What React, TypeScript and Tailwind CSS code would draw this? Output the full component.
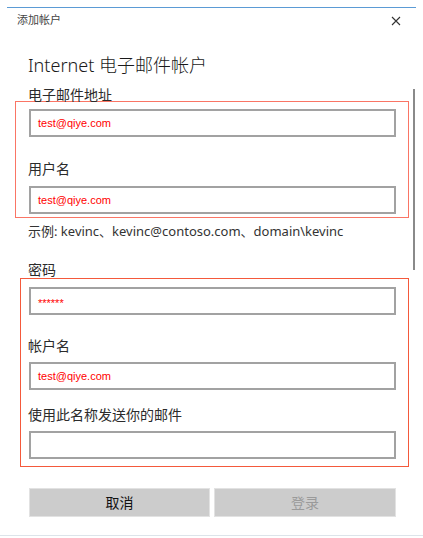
import React from 'react';

const FONT = { fontFamily: '"Noto Sans", "Noto Sans CJK SC", sans-serif' };
const INPUT_FONT = { fontFamily: '"Liberation Sans", Arial, sans-serif' };

function Field({ value, secret }: { value?: string; secret?: boolean }) {
  return (
    <div className="w-[367px] h-[28px] border-2 border-[#a2a2a2] bg-white flex items-center pl-[7px]">
      {value && (
        <span
          className={`text-[11px] leading-none text-[#ff0000] ${secret ? 'translate-y-[2px] text-[#f44]' : ''}`}
          style={INPUT_FONT}
        >
          {value}
        </span>
      )}
    </div>
  );
}

function Label({ children, className = '' }: { children: React.ReactNode; className?: string }) {
  return <div className={`h-5 text-[14px] leading-5 text-[#2b2b2b] ${className}`}>{children}</div>;
}

export default function App() {
  return (
    <div className="w-[423px] h-[538px] bg-white relative overflow-hidden" style={FONT}>
      {/* window top edge */}
      <div className="pt-[7px] px-[7px]">
        <div className="h-px w-[409px] bg-[#5b9bd5]" />
      </div>

      {/* title bar */}
      <div className="h-[24px] flex items-center justify-between pl-[17px] pr-[22px]">
        <span className="text-[11px] leading-[14px] text-[#444]">添加帐户</span>
        <svg width="10" height="10" viewBox="0 0 10 10" className="mt-[2px]">
          <path d="M1 1 L9 9 M9 1 L1 9" stroke="#333" strokeWidth="1.1" fill="none" />
        </svg>
      </div>

      {/* scrollbar */}
      <div className="absolute left-[413px] top-[89px] w-[2px] h-[181px] bg-[#8a8a8a]" />

      <div className="pl-[28px] mt-[21px]">
        <div className="text-[18px] leading-6 text-[#1a1a1a] font-light">Internet 电子邮件帐户</div>
        <Label className="mt-[8px]">电子邮件地址</Label>
      </div>

      {/* box 1 */}
      <div className="-mt-[4px] ml-[15px] w-[394px] border border-[#fa7565] pl-[13px] pt-[7px] pb-[3px]">
        <Field value="test@qiye.com" />
        <Label className="mt-[22px] -ml-px">用户名</Label>
        <div className="mt-[7px]">
          <Field value="test@qiye.com" />
        </div>
      </div>

      <div className="pl-[28px] mt-[3px]">
        <div className="h-5 text-[13px] leading-5 text-[#333]">示例: kevinc、kevinc@contoso.com、domain\kevinc</div>
        <Label className="mt-[19px]">密码</Label>
      </div>

      {/* box 2 */}
      <div className="-mt-[2px] ml-[20px] w-[389px] border border-[#f4593b] pl-[8px] pt-[8px] pb-[7px]">
        <Field value="******" secret />
        <Label className="mt-[21px] -ml-px">帐户名</Label>
        <div className="mt-[6px]">
          <Field value="test@qiye.com" />
        </div>
        <Label className="mt-[15px] -ml-px">使用此名称发送你的邮件</Label>
        <div className="mt-[6px]">
          <Field />
        </div>
      </div>

      {/* buttons */}
      <div className="mt-[21px] pl-[29px] flex gap-[4px]">
        <button className="w-[181px] h-[29px] bg-[#cccccc] border border-[#e2e2e2] text-[14px] text-[#111]">取消</button>
        <button className="w-[182px] h-[29px] bg-[#cccccc] border border-[#e2e2e2] text-[14px] text-[#9a9a9a]">登录</button>
      </div>

      <div className="mt-[18px] h-px bg-[#dde4ea]" />
    </div>
  );
}
